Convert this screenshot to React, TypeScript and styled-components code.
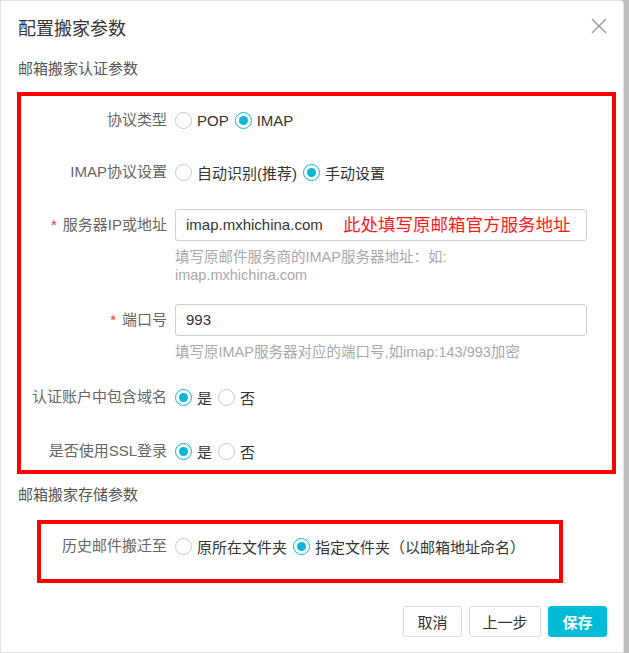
import React from "react";
import styled, { createGlobalStyle } from "styled-components";

const Global = createGlobalStyle`
  html, body { margin: 0; padding: 0; }
  body {
    background: #bdbdbd;
    font-family: "Liberation Sans", "Noto Sans CJK SC", sans-serif;
    color: #333;
  }
  * { box-sizing: border-box; }
`;

const Dialog = styled.div`
  width: 624px;
  min-height: 653px;
  background: #fff;
  border: 1px solid #e2e2e2;
  border-radius: 0 4px 0 0;
  display: flex;
  flex-direction: column;
`;

const Header = styled.div`
  display: flex;
  align-items: flex-start;
  justify-content: space-between;
  padding: 16px 16px 0 17px;
  height: 58px;
`;

const Title = styled.div`
  font-size: 18px;
  line-height: 24px;
  color: #333;
`;

const CloseBtn = styled.button`
  border: none;
  background: none;
  padding: 0;
  margin-top: 1px;
  width: 16px;
  height: 16px;
  display: flex;
  cursor: pointer;
`;

const SectionTitle = styled.div<{ $top: number }>`
  font-size: 15px;
  line-height: 20px;
  color: #555;
  padding-left: 17px;
  margin-top: ${(p) => p.$top}px;
`;

const RedBox = styled.div<{ $left: number; $width: number; $top: number; $pt: number; $pb: number }>`
  border: 4px solid #ff0000;
  margin-left: ${(p) => p.$left}px;
  width: ${(p) => p.$width}px;
  margin-top: ${(p) => p.$top}px;
  padding: ${(p) => p.$pt}px 0 ${(p) => p.$pb}px 0;
`;

const Item = styled.div<{ $gap?: number }>`
  display: flex;
  align-items: flex-start;
  margin-bottom: ${(p) => p.$gap ?? 0}px;
`;

const Label = styled.div<{ $w: number }>`
  width: ${(p) => p.$w}px;
  flex: none;
  text-align: right;
  font-size: 15px;
  line-height: 32px;
  color: #666;
  white-space: nowrap;
`;

const Star = styled.span`
  color: #f0382b;
  margin-right: 6px;
`;

const Control = styled.div`
  margin-left: 8px;
  display: flex;
  flex-direction: column;
`;

const RadioGroup = styled.div`
  display: flex;
  align-items: center;
  height: 32px;
`;

const RadioOpt = styled.label`
  display: flex;
  align-items: center;
  font-size: 15px;
  color: #333;
  margin-right: 6px;
  white-space: nowrap;
`;

const Circle = styled.span<{ $on?: boolean }>`
  width: 17px;
  height: 17px;
  border-radius: 50%;
  border: 1px solid ${(p) => (p.$on ? "#0bb6d6" : "#c8c8c8")};
  display: inline-flex;
  align-items: center;
  justify-content: center;
  margin-right: 5px;
  &::after {
    content: "";
    width: 9px;
    height: 9px;
    border-radius: 50%;
    background: #0bb6d6;
    display: ${(p) => (p.$on ? "block" : "none")};
  }
`;

const InputBox = styled.div`
  position: relative;
  width: 412px;
  height: 32px;
  border: 1px solid #cfcfcf;
  border-radius: 3px;
  padding-left: 10px;
  font-size: 15px;
  line-height: 30px;
  color: #333;
`;

const Annotation = styled.span`
  position: absolute;
  left: 167px;
  top: 0;
  line-height: 30px;
  font-size: 17.5px;
  color: #ff1a1a;
  white-space: nowrap;
`;

const Help = styled.div<{ $w?: number }>`
  margin-top: 7px;
  font-size: 14.5px;
  line-height: 18px;
  color: #a9a9a9;
  width: ${(p) => p.$w ?? 300}px;
`;

const Footer = styled.div`
  display: flex;
  justify-content: flex-end;
  gap: 7px;
  padding-right: 16px;
  margin-top: 23px;
`;

const Btn = styled.button<{ $primary?: boolean; $w: number }>`
  width: ${(p) => p.$w}px;
  height: 31px;
  border-radius: 3px;
  font-family: inherit;
  font-size: 15px;
  border: 1px solid ${(p) => (p.$primary ? "#00bcd9" : "#dcdcdc")};
  background: ${(p) => (p.$primary ? "#00bcd9" : "#fff")};
  color: ${(p) => (p.$primary ? "#fff" : "#333")};
  font-weight: ${(p) => (p.$primary ? 700 : 400)};
  padding: 0;
`;

type Opt = { text: string; on?: boolean };

const Radios = ({ opts }: { opts: Opt[] }) => (
  <RadioGroup>
    {opts.map((o) => (
      <RadioOpt key={o.text}>
        <Circle $on={o.on} />
        {o.text}
      </RadioOpt>
    ))}
  </RadioGroup>
);

export default function App() {
  const LW = 146;
  return (
    <>
      <Global />
      <Dialog>
        <Header>
          <Title>配置搬家参数</Title>
          <CloseBtn aria-label="close">
            <svg width="16" height="16" viewBox="0 0 16 16">
              <path d="M1 1 L15 15 M15 1 L1 15" stroke="#9a9a9a" strokeWidth="1.4" fill="none" />
            </svg>
          </CloseBtn>
        </Header>
        <SectionTitle $top={0}>邮箱搬家认证参数</SectionTitle>
        <RedBox $left={16} $width={599} $top={13} $pt={8} $pb={3}>
          <Item $gap={20}>
            <Label $w={LW}>协议类型</Label>
            <Control>
              <Radios opts={[{ text: "POP" }, { text: "IMAP", on: true }]} />
            </Control>
          </Item>
          <Item $gap={21}>
            <Label $w={LW}>IMAP协议设置</Label>
            <Control>
              <Radios opts={[{ text: "自动识别(推荐)" }, { text: "手动设置", on: true }]} />
            </Control>
          </Item>
          <Item $gap={20}>
            <Label $w={LW}>
              <Star>*</Star>服务器IP或地址
            </Label>
            <Control>
              <InputBox>
                imap.mxhichina.com
                <Annotation>此处填写原邮箱官方服务地址</Annotation>
              </InputBox>
              <Help>填写原邮件服务商的IMAP服务器地址：如: imap.mxhichina.com</Help>
            </Control>
          </Item>
          <Item $gap={20}>
            <Label $w={LW}>
              <Star>*</Star>端口号
            </Label>
            <Control>
              <InputBox>993</InputBox>
              <Help $w={420}>填写原IMAP服务器对应的端口号,如imap:143/993加密</Help>
            </Control>
          </Item>
          <Item $gap={22}>
            <Label $w={LW}>认证账户中包含域名</Label>
            <Control>
              <Radios opts={[{ text: "是", on: true }, { text: "否" }]} />
            </Control>
          </Item>
          <Item>
            <Label $w={LW}>是否使用SSL登录</Label>
            <Control>
              <Radios opts={[{ text: "是", on: true }, { text: "否" }]} />
            </Control>
          </Item>
        </RedBox>
        <SectionTitle $top={11}>邮箱搬家存储参数</SectionTitle>
        <RedBox $left={36} $width={526} $top={15} $pt={6} $pb={17}>
          <Item>
            <Label $w={126}>历史邮件搬迁至</Label>
            <Control>
              <Radios opts={[{ text: "原所在文件夹" }, { text: "指定文件夹（以邮箱地址命名）", on: true }]} />
            </Control>
          </Item>
        </RedBox>
        <Footer>
          <Btn $w={59}>取消</Btn>
          <Btn $w={72}>上一步</Btn>
          <Btn $w={59} $primary>
            保存
          </Btn>
        </Footer>
      </Dialog>
    </>
  );
}
